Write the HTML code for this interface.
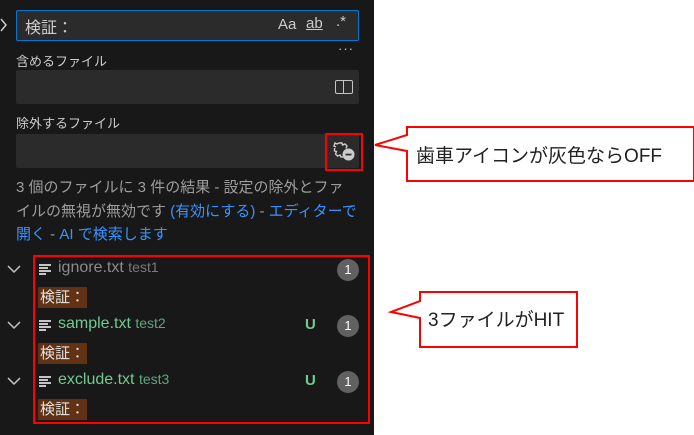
<!DOCTYPE html>
<html><head><meta charset="utf-8"><style>
*{margin:0;padding:0;box-sizing:border-box}
body{width:694px;height:435px;background:#fff;position:relative;overflow:hidden;font-family:"Segoe UI","Liberation Sans","Noto Sans CJK JP",sans-serif}
.panel{position:absolute;left:0;top:0;width:374px;height:435px;background:#181818}
.a{position:absolute;white-space:nowrap}
.inp{position:absolute;left:16px;width:343px;background:#2b2b2b;border-radius:2px}
.lbl{color:#cccccc;font-size:13px}
.msg{color:#9d9d9d;font-size:15px;left:16px}
.lnk{color:#3794ff}
.fn{font-size:16px}
.badge{position:absolute;left:337px;width:22px;height:22px;border-radius:11px;background:#616161;color:#fff;font-size:13px;text-align:center;line-height:22px}
.hl{position:absolute;left:38px;background:#613214;color:#e0e0e0;font-size:15px;padding:0 2px;height:21px;line-height:21px}
.ic{position:absolute;left:39px;width:12px}
.ic i{display:block;height:2px;background:#c5c5c5;margin-bottom:1px}
</style></head><body>
<div class="panel"></div>
<svg class="a" style="left:0;top:18px" width="8" height="14"><path d="M1 1 L6 7 L1 13" fill="none" stroke="#ccc" stroke-width="1.5"/></svg>
<div class="inp" style="top:10px;height:31px;border:1px solid #0078d4;background:#2b2b2b"></div>
<div class="a" style="left:25px;top:14px;color:#ccc;font-size:16px">検証：</div>
<div class="a" style="left:278px;top:16px;color:#ccc;font-size:15px">Aa</div>
<div class="a" style="left:306px;top:15px;color:#ccc;font-size:15px;text-decoration:underline">ab</div>
<div class="a" style="left:336px;top:13px;color:#ccc;font-size:15px">.*</div>
<div class="a" style="left:338px;top:41px;color:#ccc;font-size:13px;letter-spacing:1px">···</div>
<div class="a lbl" style="left:16px;top:51px">含めるファイル</div>
<div class="inp" style="top:70px;height:34px"></div>
<div class="a" style="left:335px;top:80px;width:18px;height:14px;border:1.5px solid #c5c5c5;border-radius:2px"><div style="position:absolute;left:6.5px;top:0;width:1.5px;height:12px;background:#c5c5c5"></div></div>
<div class="a lbl" style="left:16px;top:113px">除外するファイル</div>
<div class="inp" style="top:134px;height:34px"></div>
<svg class="a" style="left:325px;top:133px" width="38" height="38" viewBox="0 0 38 38">
<rect x="1" y="1" width="36" height="36" fill="none" stroke="#f00" stroke-width="2"/>
<path d="M14 10 L17 10 L17.5 12 L20 11 L22 13 L21 15.5 M11 14 L9 13 L10 10 L12 11 L14 10 M9.5 15 L9.5 18 L11.5 18.5 L10.5 21 L12.5 23 L15 22 L16 24 L18 24" fill="none" stroke="#ccc" stroke-width="1.4"/>
<circle cx="23.5" cy="21.5" r="6" fill="#ccc"/>
<rect x="20.5" y="20.7" width="6" height="1.7" fill="#2b2b2b"/>
</svg>
<div class="a msg" style="top:176px">3 個のファイルに 3 件の結果 - 設定の除外とファ</div>
<div class="a msg" style="top:200px">イルの無視が無効です <span class="lnk">(有効にする)</span> - <span class="lnk">エディターで</span></div>
<div class="a msg" style="top:223px"><span class="lnk">開く</span> - <span class="lnk">AI で検索します</span></div>

<svg class="a" style="left:0;top:0" width="30" height="435">
<path d="M8 266 L14 272 L20 266 M8 322 L14 328 L20 322 M8 378 L14 384 L20 378" fill="none" stroke="#c5c5c5" stroke-width="1.5"/>
</svg>
<div class="ic" style="top:264px"><i></i><i style="width:9px"></i><i></i><i style="width:7px"></i></div>
<div class="a fn" style="left:58px;top:259px;color:#8b8b8b">ignore.txt <span style="font-size:14px;color:#7a7a7a">test1</span></div>
<div class="badge" style="top:259px">1</div>
<div class="hl" style="top:287px">検証：</div>

<div class="ic" style="top:320px"><i></i><i style="width:9px"></i><i></i><i style="width:7px"></i></div>
<div class="a fn" style="left:58px;top:315px;color:#73c991">sample.txt <span style="font-size:14px;color:#5fa67a">test2</span></div>
<div class="a" style="left:305px;top:316px;color:#73c991;font-size:15px;font-weight:bold">U</div>
<div class="badge" style="top:315px">1</div>
<div class="hl" style="top:343px">検証：</div>

<div class="ic" style="top:376px"><i></i><i style="width:9px"></i><i></i><i style="width:7px"></i></div>
<div class="a fn" style="left:58px;top:371px;color:#73c991">exclude.txt <span style="font-size:14px;color:#5fa67a">test3</span></div>
<div class="a" style="left:305px;top:372px;color:#73c991;font-size:15px;font-weight:bold">U</div>
<div class="badge" style="top:371px">1</div>
<div class="hl" style="top:399px">検証：</div>

<div class="a" style="left:33px;top:255px;width:337px;height:169px;border:2px solid #f00"></div>

<svg class="a" style="left:0;top:0" width="694" height="435">
<path d="M407 127 H694 V181 H407 V151 L375 145 L407 135 Z" fill="#fff" stroke="#f00" stroke-width="2"/>
<path d="M420 292 H577 V347 H420 V318 L391 312 L420 301 Z" fill="#fff" stroke="#f00" stroke-width="2"/>
</svg>
<div class="a" style="left:416px;top:141px;font-size:19px;color:#222">歯車アイコンが灰色ならOFF</div>
<div class="a" style="left:428px;top:305px;font-size:19px;color:#222">3ファイルがHIT</div>
</body></html>
